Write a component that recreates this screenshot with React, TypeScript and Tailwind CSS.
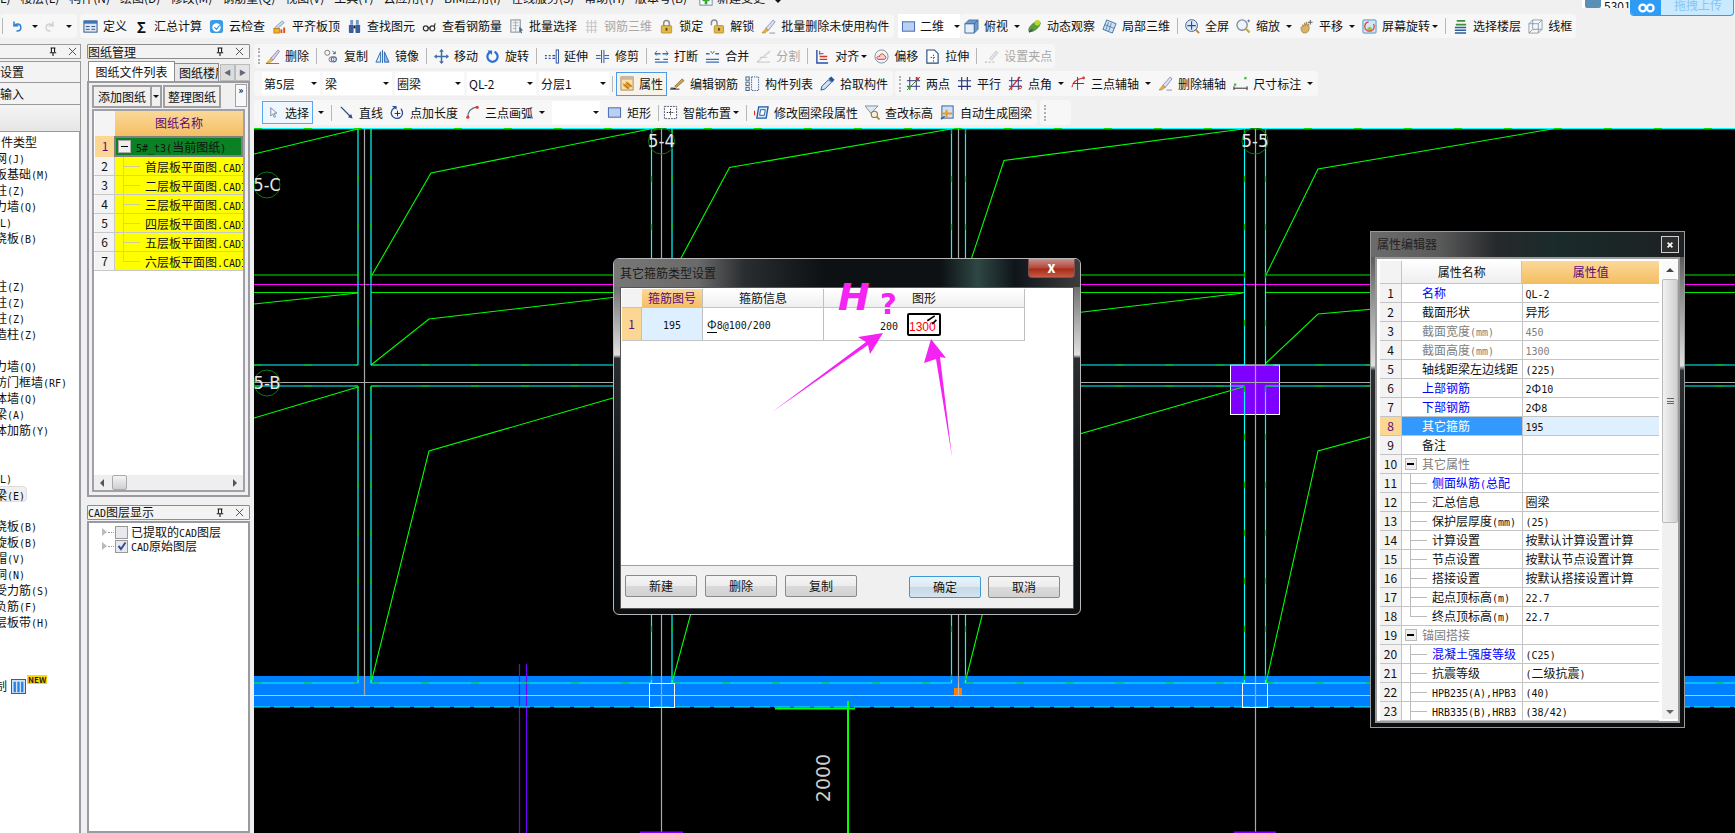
import React from 'react';

const S = (p: any) => <path fill="none" strokeWidth={1.2} strokeLinecap="round" {...p} />;
const icons: Record<string, React.ReactNode> = {
  undo: <><S d="M4 2v5h5" stroke="#2e7fd8" strokeWidth={2} /><S d="M4 7c2-3 8-4 9 1s-2 6-5 6" stroke="#2e7fd8" strokeWidth={2} /></>,
  redo: <g transform="matrix(-1 0 0 1 16 0)"><S d="M4 2v5h5" stroke="#cfd3d6" strokeWidth={2} /><S d="M4 7c2-3 8-4 9 1s-2 6-5 6" stroke="#cfd3d6" strokeWidth={2} /></g>,
  define: <><rect x="1" y="2" width="14" height="12" fill="#dfe9f5" stroke="#2a4f86" /><rect x="1" y="2" width="14" height="3" fill="#3f74b5" /><path d="M3 8h4M3 11h4M9 8h4M9 11h4" stroke="#2a4f86" /></>,
  cloud: <><rect x="1" y="1" width="14" height="14" rx="3" fill="#3a9be8" /><circle cx="8" cy="9" r="4.5" fill="#fff" /><S d="M6 9l2 2 3-4" stroke="#3a9be8" /></>,
  flush: <><path d="M3 9l8-7 2 2-8 7z" fill="#cfd8e6" stroke="#5d7fa8" strokeWidth=".7" /><rect x="2" y="10" width="6" height="5" fill="#f0b21e" stroke="#a66a10" strokeWidth=".7" /><rect x="9" y="11" width="2" height="4" fill="#d9541e" /><rect x="12" y="9" width="2" height="6" fill="#d9541e" /></>,
  binoc: <><rect x="2" y="6" width="5" height="9" rx="1" fill="#38619c" /><rect x="9" y="6" width="5" height="9" rx="1" fill="#38619c" /><rect x="3.5" y="1" width="3" height="5" fill="#6f95c7" /><rect x="9.5" y="1" width="3" height="5" fill="#6f95c7" /><rect x="7" y="7" width="2" height="3" fill="#223" /></>,
  glasses: <><circle cx="4" cy="10" r="2.6" fill="none" stroke="#333" strokeWidth="1.3" /><circle cx="11" cy="10" r="2.6" fill="none" stroke="#333" strokeWidth="1.3" /><S d="M6.5 9.5h2M13 8l1-3" stroke="#333" /></>,
  batch: <><rect x="2" y="1" width="10" height="13" fill="#f4f4f4" stroke="#7a8795" /><path d="M4 4h6M4 7h6M4 10h4M7 1v13" stroke="#9aa6b2" strokeWidth=".8" /><path d="M11 8l4 4-2 .5 1 2.5-1 .5-1-2.5-1 1z" fill="#45688f" /></>,
  rebar3d: <path d="M2 4h12M2 8h12M2 12h12M4 1v14M8 1v14M12 1v14" stroke="#c9c9c9" fill="none" strokeWidth="1.2" />,
  lock: <><S d="M5 7V4.5a3 3 0 0 1 6 0V7" stroke="#8c8c8c" strokeWidth="1.6" /><rect x="2.5" y="7" width="11" height="8" rx="1" fill="#e3b84a" stroke="#a67c1c" strokeWidth=".7" /><rect x="7" y="9.5" width="2" height="3" fill="#6d4c0f" /></>,
  unlock: <><S d="M1.5 6V4a3 3 0 0 1 6 0v2" stroke="#8c8c8c" strokeWidth="1.6" /><rect x="4.5" y="7" width="10" height="8" rx="1" fill="#e3b84a" stroke="#a67c1c" strokeWidth=".7" /><rect x="8.5" y="9.5" width="2" height="3" fill="#6d4c0f" /></>,
  brush: <><path d="M5 10L13 1l2 2-7 9z" fill="#dcdff2" stroke="#6a6fb0" strokeWidth=".7" /><path d="M5 10l3 2-4 3H1z" fill="#e8b23a" stroke="#a8761c" strokeWidth=".5" /><path d="M9 15h6" stroke="#7f90b5" /></>,
  rect: <rect x="1.5" y="3" width="13" height="10" fill="#b9d0f2" stroke="#3f63ad" />,
  cube: <><path d="M1 5h10v10H1z" fill="#e4eefa" stroke="#3d6797" /><path d="M1 5l4-4h10l-4 4zM11 5l4-4v10l-4 4z" fill="#6c9bcb" stroke="#3d6797" strokeWidth=".8" /></>,
  orbit: <><ellipse cx="8" cy="8" rx="7.5" ry="3.5" transform="rotate(-40 8 8)" fill="#5a9e3a" stroke="#2e6a20" strokeWidth=".6" /><circle cx="11" cy="4" r="3" fill="#b7d92a" /><path d="M2 14l4-3" stroke="#456" strokeWidth="1.5" /></>,
  local3d: <><path d="M5 1l10 4-4 10L1 11z" fill="#cfe0f5" stroke="#41719f" /><path d="M3 6l10 4M7 3.5L4 12M10 4.5L7 13" stroke="#41719f" strokeWidth=".8" /></>,
  zoomall: <><circle cx="7" cy="7" r="6.3" fill="#dbe7f6" stroke="#3d5f8c" /><path d="M7 2.5v9M2.5 7h9" stroke="#2a4f86" strokeWidth="1.2" /><path d="M11.5 11.5l3.5 3.5" stroke="#c9842d" strokeWidth="2" /></>,
  zoom: <><circle cx="6.5" cy="6.5" r="5.5" fill="#eef3f9" stroke="#7b8da3" strokeWidth="1.4" /><path d="M10.5 10.5l4 4" stroke="#c9a14a" strokeWidth="2.2" /><path d="M12 2h3M13.5 .5v3" stroke="#667" strokeWidth=".9" /></>,
  hand: <><path d="M3 9l1-3 1 2 1-4 1 3 1-4 1 4 1-2 1 4c0 4-2 6-5 6-3 0-4-3-4-6z" fill="#d9b36a" stroke="#8f6d2e" strokeWidth=".6" /><path d="M12 1v5M9.5 3.5h5" stroke="#556" /></>,
  rotate: <><rect x="1" y="1" width="14" height="14" rx="1" fill="#cfe6f5" stroke="#4a93c4" /><path d="M5 11l3-3 3 2-2 3z" fill="#8dc63f" /><circle cx="8" cy="8" r="5" fill="none" stroke="#e53a2e" strokeWidth="1.3" strokeDasharray="22 6" /></>,
  layers: <><path d="M4 2l9 0M3 6h11" stroke="#3d8f3a" strokeWidth="2" /><path d="M2 9h12M2 12h12M2 15h12" stroke="#2a5f9c" strokeWidth="1.6" /></>,
  wire: <path d="M1 5h10v10H1zM1 5l4-4h10v10l-4 4M11 5l4-4M5 1v10H15M5 11l-4 4" fill="none" stroke="#7f93a8" strokeWidth=".9" />,
  erase: <><path d="M6 10l8-9 1.5 1.5-7 9.5z" fill="#d9d3ef" stroke="#6a5fa8" strokeWidth=".7" /><path d="M6 10l2.5 2-4 3H1.5z" fill="#efc04a" stroke="#a8761c" strokeWidth=".5" /><path d="M1 15.5h14" stroke="#5b6f90" /></>,
  copy: <><circle cx="3.5" cy="4" r="2.7" fill="none" stroke="#777" /><circle cx="10.5" cy="11" r="2.7" fill="none" stroke="#4a6f9c" strokeWidth="1.3" /><circle cx="8" cy="11" r="2.7" fill="none" stroke="#777" /><path d="M9 2l3 3M12 2.5V5H9.5" stroke="#3d5f8c" fill="none" /></>,
  mirror: <><path d="M1 14L6 3v11z" fill="#dfeaf7" stroke="#2e6bb0" /><path d="M15 14L10 3v11z" fill="#8fb6e2" stroke="#2e6bb0" /><path d="M8 1v14" stroke="#2e6bb0" /></>,
  move: <><path d="M8 1v14M1 8h14" stroke="#3f6fa8" strokeWidth="1.6" /><path d="M8 0l2.5 3h-5zM8 16l2.5-3h-5zM0 8l3-2.5v5zM16 8l-3-2.5v5z" fill="#3f6fa8" /></>,
  rotb: <><S d="M5 3.5a5.5 5.5 0 1 0 6 0" stroke="#2e6fd0" strokeWidth="2.4" /><path d="M2.5 1.5h5v5z" fill="#2e6fd0" /></>,
  extend: <><path d="M1 7h2M5 7h2M9 7h3M1 10h2M5 10h2M9 10h3" stroke="#2b4f9e" strokeWidth="1.2" /><rect x="13" y="1" width="2.5" height="14" fill="none" stroke="#2b4f9e" /></>,
  trim: <><path d="M1 7h5M10 7h5M1 10h5M10 10h5" stroke="#2b4f9e" /><path d="M7 1v14M9.5 1v14" stroke="#2b4f9e" /></>,
  brk: <><path d="M1 11h5M10 11h5M1 14h14" stroke="#3b6fb0" strokeWidth="1.2" /><path d="M1 5h6M9 5h6" stroke="#3b6fb0" strokeWidth="1.5" /><path d="M3 2l-2 3 2 2M13 2l2 3-2 2" stroke="#3b6fb0" fill="none" /></>,
  merge: <><path d="M1 11h14M1 14h14" stroke="#3b6fb0" strokeWidth="1.2" /><path d="M1 5h4M11 5h4" stroke="#3b6fb0" strokeWidth="1.5" /><path d="M6 2l2 3 2-3" stroke="#3b6fb0" fill="none" /></>,
  split: <><path d="M1 14L15 2M1 14h14M4 9h8" stroke="#cfcfcf" strokeWidth="1.3" /><path d="M10 5l4-3 1 2-4 3z" fill="#dcdcdc" /></>,
  align: <><path d="M2 1v14h12" stroke="#2b4f9e" strokeWidth="1.5" fill="none" /><path d="M5 11h8M5 8h8" stroke="#d2342a" strokeWidth="1.4" /><path d="M5 5h4M5 2v4" stroke="#2b4f9e" /></>,
  offset: <><circle cx="8" cy="8" r="7" fill="#f3f3f3" stroke="#7e8c9c" /><path d="M4 11c-2-2 0-4 2-3 0-3 4-4 5-1 2 0 2 4 0 4z" fill="#f5d4d0" stroke="#d23a2e" /></>,
  stretch: <><path d="M2 1h8l4 4v10H2z" fill="#fff" stroke="#27497f" strokeWidth="1.2" /><path d="M9 6v8M6 9h6" stroke="#27497f" strokeDasharray="1.5 1.5" /></>,
  grip: <><path d="M6 10l7-8 2 2-7 8z" fill="#e4e4e4" stroke="#c8c8c8" /><path d="M1 14h2M5 14h2M9 14h2" stroke="#bbb" strokeWidth="1.5" /></>,
  prop: <><rect x="1" y="1" width="13" height="14" fill="#fbe1a8" stroke="#9a8a70" /><rect x="1" y="1" width="13" height="3" fill="#cbb896" /><path d="M3 10l5-4 5 4-5 4z" fill="#e69a2c" /><path d="M3 8l7 6M6 6l7 6" stroke="#8a5a10" strokeWidth=".7" /></>,
  edit: <><path d="M5 11l8-8 2 2-8 7z" fill="#d2a14e" stroke="#7e5c1e" strokeWidth=".7" /><path d="M1 13c2-1 3 1 5 0" stroke="#222" strokeWidth="1.2" fill="none" /><path d="M0 14h10" stroke="#222" /></>,
  list: <><rect x="1" y="1" width="3.5" height="3.5" fill="none" stroke="#3e5f8a" /><rect x="1" y="6.5" width="3.5" height="3.5" fill="none" stroke="#3e5f8a" /><rect x="1" y="12" width="3.5" height="3.5" fill="none" stroke="#3e5f8a" /><rect x="7" y="1" width="7.5" height="14.5" fill="none" stroke="#3e5f8a" strokeDasharray="1.5 1" /></>,
  picker: <><path d="M1 15l1-4 7-7 3 3-7 7z" fill="#cfe3fa" stroke="#1f54a6" /><path d="M9 3l3-2.5 3.500 3.500L13 7z" fill="#1f54a6" /></>,
  two: <><path d="M4 1v14M11 1v14M1 5h14M1 11h14" stroke="#24337c" /><path d="M1 15L15 1" stroke="#5a7030" /><circle cx="3.5" cy="12.5" r="1.6" fill="#3fb23f" /><circle cx="12.5" cy="3" r="1.6" fill="#d03030" /></>,
  par: <path d="M5 1v14M11 1v14M1 5h14M1 11h14" stroke="#24337c" strokeWidth="1.2" />,
  ang: <><path d="M4 1v14M11 1v14M1 5h14M1 11h14" stroke="#24337c" /><path d="M1 15L13 1" stroke="#e02020" strokeWidth="1.3" /><circle cx="13" cy="12" r="1.5" fill="none" stroke="#e02020" /></>,
  arc3: <><path d="M1 12C2 5 7 3 14 2" stroke="#d23a3a" fill="none" strokeWidth="1.3" /><path d="M7 1v14M2 8h12" stroke="#2b3f80" /><circle cx="13.5" cy="2" r="1.4" fill="#d23a3a" /></>,
  dim: <><rect x="12" y="1" width="2.5" height="2.5" fill="#3fc23f" /><rect x="1" y="8" width="2.5" height="2.5" fill="#3fc23f" /><path d="M1 13h14M1 11v4M15 11v4" stroke="#222" /></>,
  cursor: <path d="M4 1v12l3-3 2 5 2-1-2-5h4z" fill="#f1f6ff" stroke="#59647a" />,
  line: <><path d="M2 2l11 11" stroke="#2c4f86" strokeWidth="1.4" /><path d="M14.5 14.5l-5-1.500 3.500-3.500z" fill="#2c4f86" /></>,
  addlen: <><S d="M6 2.5a6 6 0 1 0 6 2" stroke="#2b4f9e" strokeWidth="1.4" /><path d="M8 6v6M5 9h6" stroke="#222" /><path d="M2 1h5v4z" fill="#2b4f9e" /></>,
  arc: <><path d="M3 13C3 7 7 3 13 2" stroke="#5f6f82" fill="none" strokeWidth="1.3" /><circle cx="3" cy="13" r="1.7" fill="#e03a2e" /><circle cx="13" cy="2.5" r="1.7" fill="#e03a2e" /></>,
  smart: <><rect x="1.5" y="1.5" width="13" height="13" fill="#fff" stroke="#40506a" strokeDasharray="2 1" /><path d="M8 4v8M4 8h8" stroke="#222" strokeDasharray="1.5 1" /></>,
  modify: <><path d="M5 2h10l-2 12H3z" fill="#d8e8f8" stroke="#1f5aa6" strokeWidth="1.4" /><path d="M7 5h5l-1 6H6z" fill="#fff" stroke="#1f5aa6" /><path d="M.5 6v5" stroke="#d03020" strokeWidth="1.4" /></>,
  funnel: <><path d="M0 1h14L8 7v4z" fill="#dfe7ef" stroke="#7d8ea0" /><circle cx="10" cy="10" r="3.3" fill="#f6f2df" stroke="#8f7d3a" strokeWidth="1.2" /><path d="M12.5 12.5l3 3" stroke="#b78a2a" strokeWidth="2" /></>,
  auto: <><rect x="2" y="1" width="12" height="13" fill="#cfe0f7" stroke="#2b5fa8" /><path d="M7 5v9M2 9h11" stroke="#e39a2e" strokeWidth="2.2" /><path d="M1 15l4-3" stroke="#2b5fa8" strokeWidth="1.5" /></>,
};

function Ic({ n, cls = 'w-[15px] h-[15px]' }: { n: string; cls?: string }) {
  return <svg viewBox="0 0 16 16" className={`${cls} shrink-0`}>{icons[n]}</svg>;
}
const Caret = ({ cls = '-ml-[1px]' }: { cls?: string }) => (
  <span className={`shrink-0 w-0 h-0 border-x-[3px] border-x-transparent border-t-[3px] border-t-[#111] ${cls}`} />
);
const Sep = () => <span className="shrink-0 w-px h-[16px] bg-[#b8b8b8]" />;

// Latin runs use the narrow half-width look of the original bitmap font.
const Mx = ({ t }: { t: string }) => (
  <>
    {t.split(/([\x21-\x7e]+)/).map((p, i) =>
      /^[\x21-\x7e]/.test(p) ? <span key={i} className="text-[10px] [font-family:'DejaVu_Sans_Mono',monospace]">{p}</span> : p
    )}
  </>
);

type E = string | [string, string, boolean?];
function Items({ list }: { list: E[] }) {
  return (
    <>
      {list.map((e, i) =>
        e === '|' ? <Sep key={i} /> : e === 'v' ? <Caret key={i} /> : e === 't' ? <Caret key={i} cls="-ml-[5px]" /> : e === '<' ? <span key={i} className="w-0 -ml-[10px] shrink-0" /> : (
          <span key={i} className={`flex items-center gap-[5px] shrink-0 whitespace-nowrap ${(e as any)[2] ? 'text-[#a8a8a8]' : 'text-[#111]'}`}>
            <Ic n={(e as any)[0]} />
            {(e as any)[1]}
          </span>
        )
      )}
    </>
  );
}
const Bar = ({ children, cls = '' }: { children: React.ReactNode; cls?: string }) => (
  <div className={`flex items-center gap-[7px] bg-[#f7f7f7] rounded-sm h-full ${cls}`}>{children}</div>
);
const Grip = () => <span className="shrink-0 w-[2px] h-[16px] -mr-[2px] border-l-2 border-dotted border-[#b0b0b0]" />;

const r1a: E[] = [['define', '定义']];
const r1b: E[] = [['cloud', '云检查'], ['flush', '平齐板顶'], ['binoc', '查找图元'], ['glasses', '查看钢筋量'], ['batch', '批量选择'], ['rebar3d', '钢筋三维', true], ['lock', '锁定'], ['unlock', '解锁'], ['brush', '批量删除未使用构件']];
const r1c: E[] = [['cube', '俯视'], 'v', ['orbit', '动态观察'], ['local3d', '局部三维'], '|', ['zoomall', '全屏'], ['zoom', '缩放'], 'v', ['hand', '平移'], 'v', ['rotate', '屏幕旋转'], 't', '|', ['layers', '选择楼层'], ['wire', '线框']];
const r2: E[] = [['erase', '删除'], '|', ['copy', '复制'], ['mirror', '镜像'], '|', ['move', '移动'], ['rotb', '旋转'], '|', ['extend', '延伸'], ['trim', '修剪'], '|', ['brk', '打断'], ['merge', '合并'], ['split', '分割', true], '|', ['align', '对齐'], 't', ['offset', '偏移'], ['stretch', '拉伸'], '|', ['grip', '设置夹点', true]];
const r3a: E[] = [['edit', '编辑钢筋'], ['list', '构件列表'], ['picker', '拾取构件']];
const r3b: E[] = [['two', '两点'], ['par', '平行'], ['ang', '点角'], 'v', ['arc3', '三点辅轴'], 'v', ['brush', '删除辅轴'], ['dim', '尺寸标注'], 'v'];
const r4a: E[] = [['line', '直线'], ['addlen', '点加长度'], ['arc', '三点画弧'], 'v'];
const r4b: E[] = [['rect', '矩形'], '|', '<', ['smart', '智能布置'], 't', '|', ['modify', '修改圈梁段属性'], ['funnel', '查改标高'], ['auto', '自动生成圈梁']];

const menus = ['L)', '楼层(L)', '构件(N)', '绘图(D)', '修改(M)', '钢筋量(Q)', '视图(V)', '工具(T)', '云应用(Y)', 'BIM应用(I)', '在线服务(S)', '帮助(H)', '版本号(B)'];

const listRows = ['件类型', '网(J)', '板基础(M)', '柱(Z)', '力墙(Q)', 'L)', '浇板(B)', '', '', '柱(Z)', '柱(Z)', '柱(Z)', '造柱(Z)', '', '力墙(Q)', '防门框墙(RF)', '体墙(Q)', '梁(A)', '体加筋(Y)', '', '', 'L)', '*梁(E)', '', '浇板(B)', '旋板(B)', '帽(V)', '洞(N)', '受力筋(S)', '负筋(F)', '层板带(H)', '', '', ''];

const Pin = () => (
  <svg viewBox="0 0 10 12" className="w-[8px] h-[10px]"><path d="M2 1h6M3 1v5M7 1v5M1 7h8M5 7v4" stroke="#111" strokeWidth="1.3" fill="none" /></svg>
);
const XIc = () => (
  <svg viewBox="0 0 10 10" className="w-[9px] h-[9px]"><path d="M1 1l8 8M9 1l-8 8" stroke="#444" fill="none" /></svg>
);

function PanelHead({ t, cls = '' }: { t: string; cls?: string }) {
  return (
    <div className={`h-[15px] shrink-0 flex items-center border border-[#8c8c8c] bg-[#f3f3f3] rounded-[1px] overflow-hidden leading-none ${cls}`}>
      <span className="flex-1 whitespace-nowrap overflow-hidden"><Mx t={t} /></span>
      <span className="mr-[11px] flex"><Pin /></span>
      <span className="mr-[5px] flex"><XIc /></span>
    </div>
  );
}

function LeftPanel() {
  return (
    <div className="w-[81px] shrink-0 flex flex-col bg-[#f0f0f0] overflow-hidden">
      <div className="h-[15px] shrink-0 flex items-center justify-end border-y border-[#9a9a9a] border-r bg-[#f3f3f3]">
        <span className="mr-[11px] flex"><Pin /></span><span className="mr-[3px] flex"><XIc /></span>
      </div>
      <div className="mt-[2px] h-[22px] shrink-0 flex items-center border-y border-r border-[#9a9a9a] bg-[#f3f3f3]">设置</div>
      <div className="h-[22px] shrink-0 flex items-center border-b border-r border-[#9a9a9a] bg-[#f3f3f3]">输入</div>
      <div className="h-[27px] shrink-0 border-r border-b border-[#9a9a9a] bg-[linear-gradient(180deg,#f4f4f4,#e6e6e6)]" />
      <div className="flex-1 bg-white border-r-2 border-[#9a9aa2] pt-[2px]">
        {listRows.map((t, i) => (
          <div key={i} className="h-[16px] leading-[16px] whitespace-nowrap overflow-hidden">
            {t.startsWith('*') ? (
              <span className="inline-block w-[28px] h-[16px] bg-[#f0f0f0] border border-[#ddd] rounded-r-sm -ml-[1px] overflow-hidden"><span className="-ml-[5px] inline-block"><Mx t={t.slice(1)} /></span></span>
            ) : (
              <span className={`inline-block ${t === '件类型' ? 'ml-[1px]' : t === 'L)' ? '' : '-ml-[5px]'}`}><Mx t={t} /></span>
            )}
          </div>
        ))}
        <div className="h-[16px] flex items-center relative leading-[16px]">
          <span className="-ml-[5px] inline-block">制</span>
          <svg viewBox="0 0 16 16" className="ml-[4px] w-[15px] h-[15px]"><rect x=".5" y=".5" width="15" height="15" fill="#cfe4fb" stroke="#35566f" /><path d="M4 3v11M8 3v11M12 3v11" stroke="#2a83e0" strokeWidth="2.5" /></svg>
          <span className="absolute left-[27px] -top-[3px] bg-[#ffd800] text-[#222] text-[8px] font-bold leading-[9px] px-[1px]">NEW</span>
        </div>
      </div>
    </div>
  );
}

const drawings = ['首层板平面图', '二层板平面图', '三层板平面图', '四层板平面图', '五层板平面图', '六层板平面图'];

function MidPanel() {
  return (
    <div className="w-[163px] ml-[6px] shrink-0 flex flex-col">
      <PanelHead t="图纸管理" />
      <div className="h-[20px] mt-[2px] shrink-0 flex items-end pl-[1px]">
        <div className="w-[87px] h-[20px] bg-white border border-b-0 border-[#8c8c8c] text-center leading-[19px]">图纸文件列表</div>
        <div className="w-[44px] h-[18px] bg-[#e8e8e8] border border-b-0 border-l-0 border-[#8c8c8c] pl-[4px] leading-[17px] overflow-hidden whitespace-nowrap">图纸楼层</div>
        <div className="w-[15px] h-[17px] ml-[1px] bg-[#dcdcdc] border border-[#bbb] flex items-center justify-center text-[7px] text-[#667]">◀</div>
        <div className="w-[15px] h-[17px] bg-[#e4e4e4] border border-[#bbb] flex items-center justify-center text-[7px] text-[#667]">▶</div>
      </div>
      <div className="h-[416px] shrink-0 bg-[#f0f0f0] border-2 border-[#9a9aa0] flex flex-col">
        <div className="h-[26px] shrink-0 flex items-center pl-[3px] relative">
          <span className="w-[58px] h-[23px] border-2 border-[#a0a0a0] border-r-0 bg-[#f0f0f0] text-center leading-[19px]">添加图纸</span>
          <span className="w-[12px] h-[23px] border-2 border-[#a0a0a0] flex items-center justify-center"><Caret cls="" /></span>
          <span className="ml-[1px] w-[58px] h-[23px] border-2 border-[#a0a0a0] text-center leading-[19px]">整理图纸</span>
          <span className="absolute right-[1px] top-[1px] w-[12px] h-[23px] border border-[#a0a0a0] bg-[#f8f8f8] text-center text-[9px] font-bold leading-[12px]">»</span>
        </div>
        <div className="flex-1 mx-[3px] border-2 border-[#a0a0a8] bg-white flex flex-col overflow-hidden">
          <div className="h-[25px] shrink-0 flex">
            <div className="w-[20px] ml-[1px] bg-[#f4f4f4]" />
            <div className="flex-1 bg-[linear-gradient(180deg,#fbd899,#f4bf63)] text-center leading-[24px] text-[#5a0a78]">图纸名称</div>
          </div>
          <div className="h-[21px] shrink-0 flex">
            <div className="w-[20px] ml-[1px] bg-[#fcd793] text-center leading-[20px] text-[#5a0a78]">1</div>
            <div className="flex-1 bg-[#0a8224] border-2 border-[#808080] flex items-center pl-[2px] -ml-[1px] whitespace-nowrap overflow-hidden">
              <span className="w-[13px] h-[13px] border border-[#aaa] bg-[#eee] flex items-center justify-center mr-[5px] shrink-0"><span className="w-[7px] h-[1px] bg-black" /></span>
              <span><Mx t="5#_t3(当前图纸)" /></span>
            </div>
          </div>
          {drawings.map((d, i) => (
            <div key={d} className="h-[19px] shrink-0 flex border-b border-[#c8c8c8]">
              <div className="w-[20px] ml-[1px] bg-[#f3f3f3] text-center leading-[18px] border-r border-[#c8c8c8]">{i + 2}</div>
              <div className="flex-1 bg-[#ffff00] relative pl-[30px] leading-[19px] whitespace-nowrap overflow-hidden">
                <span className={`absolute left-[8px] top-0 w-px bg-[#cfcf90] ${i === 5 ? 'h-[10px]' : 'h-[19px]'}`} />
                <span className="absolute left-[8px] top-[9px] w-[17px] h-px bg-[#cfcf90]" />
                <Mx t={`${d}.CADI`} />
              </div>
            </div>
          ))}
          <div className="flex-1" />
          <div className="h-[15px] shrink-0 bg-[#eeeeee] flex items-center justify-between px-[6px] relative">
            <span className="w-0 h-0 border-y-[4px] border-y-transparent border-r-[4px] border-r-[#555]" />
            <span className="absolute left-[18px] top-0 w-[15px] h-[15px] border border-[#aaa] rounded-[2px] bg-[linear-gradient(180deg,#f4f4f4,#cfcfcf)]" />
            <span className="w-0 h-0 border-y-[4px] border-y-transparent border-l-[4px] border-l-[#555]" />
          </div>
        </div>
        <div className="h-[3px] shrink-0" />
      </div>
      <div className="h-[8px] shrink-0" />
      <PanelHead t="CAD图层显示" />
      <div className="mt-[1px] flex-1 bg-white border-2 border-[#9a9aa2] pt-[2px]">
        {([['已提取的CAD图层', false], ['CAD原始图层', true]] as [string, boolean][]).map(([t, c]) => (
          <div key={t} className="h-[14px] flex items-center pl-[13px] whitespace-nowrap">
            <span className="w-0 h-0 border-y-[4px] border-y-transparent border-l-[5px] border-l-[#bbb]" />
            <span className="w-[6px] h-px ml-[1px] border-t border-dotted border-[#999]" />
            <span className="ml-[1px] mr-[3px] w-[13px] h-[13px] border border-[#999] bg-[#e8e8ee] flex items-center justify-center">
              {c ? <svg viewBox="0 0 10 10" className="w-[10px] h-[10px]"><path d="M1.5 5l2.5 3L8.500 1.500" stroke="#34509c" strokeWidth="2" fill="none" /></svg> : null}
            </span>
            <span><Mx t={t} /></span>
          </div>
        ))}
      </div>
    </div>
  );
}

const W = 1.2;
function Canvas() {
  const segs = [[254, 358], [371, 651.5], [672, 951.5], [965.5, 1244.5], [1265.5, 1735]];
  const cols = [358, 371, 651.5, 672, 951.5, 965.5, 1244.5, 1265.5];
  const grays: [number, number][] = [[364.5, 695], [661.5, 833], [958.5, 695], [1255.5, 833]];
  const diag = [
    '254,154 358,129', '372,275 431,173 650,129', '672,275 729.5,167.5 951,129', '966,275 1004,160.5 1243,129', '1266,275 1318,169 1558,128',
    '254,304 358,293', '371,365 429,319 651,293', '672,365 730,319 951,293', '965,365 1024,319 1243,293', '1266,363 1318,314 1552,293',
    '254,418 358,387', '371,683 429,451 651,387', '672,683 735,451 951,387', '965,683 1024,450 1243,387', '1266,683 1318,451 1552,387',
  ];
  return (
    <div className="relative flex-1 bg-black overflow-hidden">
      <svg viewBox="254 128 1481 705" className="absolute inset-0 w-[1481px] h-[705px]">
        <rect x="254" y="676" width="1481" height="31" fill="#0080ff" />
        <path d="M519.5 664V833M526.5 664V833" stroke="#7000ff" strokeWidth={W} />
        <rect x="1230.5" y="365" width="49" height="49.500" fill="#8000ff" stroke="#fff" strokeWidth="1" />
        {diag.map(d => <polyline key={d} points={d} fill="none" stroke="#00ff00" strokeWidth="1.1" />)}
        {segs.map(([a, b]) => (
          <g key={a}>
            <path d={`M${a} 275H${b}M${a} 292.5H${b}`} stroke="#00e800" strokeWidth={W} />
            {[365, 386, 683].map(y => <g key={y}><path d={`M${a} ${y}H${b}`} stroke="#00ffff" strokeWidth={W} /><path d={`M${a} ${y}H${b}`} stroke="#00c800" strokeWidth={W} strokeDasharray="8 42" /></g>)}
          </g>
        ))}
        <path d="M254 284.5H1735" stroke="#ff00ff" strokeWidth={W} />
        <path d="M254 382.5H1735" stroke="#aaaaaa" strokeWidth={W} />
        <path d="M254 695.5H1735" stroke="#c4c4c4" strokeWidth={W} />
        <path d="M254 707H1735" stroke="#00ffe0" strokeWidth={W} strokeDasharray="16 4" />
        {cols.map(x => <g key={x}><path d={`M${x} 128V365M${x} 386V683`} stroke="#00ffff" strokeWidth={W} /><path d={`M${x} 128V365M${x} 386V683`} stroke="#00c800" strokeWidth={W} strokeDasharray="6 42" /></g>)}
        {grays.map(([x, e]) => <path key={x} d={`M${x} 128V${e}`} stroke="#a8a8a8" strokeWidth={W} />)}
        <path d="M254 128.5H1735" stroke="#00ffff" strokeWidth="1.5" />
        <path d="M254 128.5H1735" stroke="#00e000" strokeWidth="1.5" strokeDasharray="8 42" />
        <rect x="649.5" y="683.5" width="25" height="24" fill="none" stroke="#fff" />
        <rect x="1242.5" y="683.5" width="25" height="24" fill="none" stroke="#fff" />
        <rect x="954" y="688" width="8" height="7" fill="#ff7f00" />
        <path d="M958.5 683V695" stroke="#bbb" />
        <path d="M775 708.5H855" stroke="#00ff00" strokeWidth="2" />
        <path d="M848 701V833" stroke="#00ff00" strokeWidth="2" />
        <path d="M640 832.5H683M1234 832.5H1276" stroke="#8000ff" strokeWidth="2" />
        {([[267, 185, '5-C'], [267, 383, '5-B'], [661.5, 141, '5-4'], [1255, 141, '5-5']] as [number, number, string][]).map(([x, y, t]) => (
          <g key={t}>
            <circle cx={x} cy={y} r="13" fill="none" stroke="#0c7a0c" strokeWidth="1" />
            <text x={x} y={y + 6} textAnchor="middle" textLength={27} lengthAdjust="spacingAndGlyphs" fill="#e6e6e6" fontSize="18" fontFamily="DejaVu Sans">{t}</text>
          </g>
        ))}
        <text transform="translate(830 778) rotate(-90)" textAnchor="middle" fill="#cfcfcf" fontSize="19" fontFamily="DejaVu Sans">2000</text>
      </svg>
    </div>
  );
}

const glassSide = 'bg-[linear-gradient(180deg,#3a3a3a_0%,#8a8a8a_12%,#e0e0e0_27%,#2a2e30_28%,#14181a_60%,#0c0f11_100%)]';
const Btn = ({ t, def, cls = '' }: { t: string; def?: boolean; cls?: string }) => (
  <div className={`w-[72px] h-[22px] rounded-[2px] border flex items-center justify-center ${def ? 'border-[#3c9bd6] bg-[linear-gradient(180deg,#eaf4fb_0%,#dbe9f2_50%,#c6d9e6_52%,#d4e3ee_100%)]' : 'border-[#8a8a8a] bg-[linear-gradient(180deg,#f5f5f5_0%,#ececec_50%,#dadada_52%,#d2d2d2_100%)]'} ${cls}`}>{t}</div>
);

function Dialog() {
  return (
    <div className={`absolute left-[613px] top-[258px] w-[468px] h-[357px] rounded-t-md rounded-b-md border border-[#b8b8b8] p-0 flex flex-col overflow-hidden ${glassSide}`}>
      <div className="h-[28px] shrink-0 relative bg-[linear-gradient(90deg,#777_0%,#6a6a6a_18%,#2a2d2f_28%,#0d1114_45%,#0d1114_70%,#2f4744_78%,#10151a_86%,#3c3c3c_100%)]">
        <span className="absolute left-[6px] top-[6px] text-[#1a1a1a] leading-[16px]">其它箍筋类型设置</span>
        <div className="absolute right-[5px] top-0 w-[47px] h-[19px] rounded-b-[4px] border border-t-0 border-[#7a5050] bg-[linear-gradient(180deg,#c9908a,#b4473a_50%,#a82a15_55%,#c45a48)] flex items-center justify-center text-white text-[12px] font-black leading-none">X</div>
      </div>
      <div className="flex-1 mx-[6px] mb-[5px] border border-[#555] bg-white flex flex-col overflow-hidden">
        <div className="flex-1 pt-[1px] pl-[1px]">
          <div className="flex h-[18px]">
            <div className="w-[20px] bg-[#f3f3f3]" />
            <div className="w-[61px] bg-[linear-gradient(180deg,#fbd899,#f4bf63)] text-center text-[#5a0a78] leading-[18px] border-r border-[#c0c0c0]">箍筋图号</div>
            <div className="w-[121px] bg-[linear-gradient(180deg,#ffffff,#efefef)] text-center leading-[18px] border-r border-[#c0c0c0]">箍筋信息</div>
            <div className="w-[201px] bg-[linear-gradient(180deg,#ffffff,#efefef)] text-center leading-[18px] border-r border-[#c0c0c0]">图形</div>
          </div>
          <div className="flex h-[34px] border-y border-[#c4c4c4] w-[403px]">
            <div className="w-[20px] bg-[#fcd793] text-center text-[#5a0a78] leading-[32px] border-r border-[#c0c0c0]">1</div>
            <div className="w-[61px] bg-[#deefff] text-center leading-[32px] border-r border-[#c0c0c0]"><Mx t="195" /></div>
            <div className="w-[121px] pl-[4px] leading-[32px] border-r border-[#c0c0c0]"><span className="border-b border-black">Φ</span><Mx t="8@100/200" /></div>
            <div className="w-[201px] pl-[56px] flex items-center border-r border-[#c0c0c0]">
              <span className="mt-[2px] w-[19px]"><Mx t="200" /></span>
              <div className="relative ml-[8px] w-[34px] h-[23px] border-2 border-black rounded-[2px] overflow-hidden">
                <span className="absolute left-0 bottom-0 text-[#ff0000] text-[12px] leading-[13px] [font-family:'Liberation_Sans',sans-serif]">1300</span>
                <svg viewBox="0 0 34 23" className="absolute inset-0 w-[30px] h-[19px]"><path d="M21 7l9-6M27 11l5-5" stroke="#000" strokeWidth="2" fill="none" /></svg>
              </div>
            </div>
          </div>
        </div>
        <div className="h-[43px] shrink-0 border-t border-[#a0a0a0] bg-[#f0f0f0] flex pl-[4px] pt-[9px]">
          <Btn t="新建" /><Btn t="删除" cls="ml-[8px]" /><Btn t="复制" cls="ml-[8px]" /><Btn t="确定" def cls="ml-[52px] mt-[1px]" /><Btn t="取消" cls="ml-[7px] mt-[1px]" />
        </div>
      </div>
    </div>
  );
}

type P = [string, string, string?, number?];
const props: P[] = [
  ['名称', 'QL-2', 'b'], ['截面形状', '异形'], ['截面宽度(mm)', '450', 'g'], ['截面高度(mm)', '1300', 'g'], ['轴线距梁左边线距', '(225)'], ['上部钢筋', '2Φ10', 'b'], ['下部钢筋', '2Φ8', 'b'], ['其它箍筋', '195', 's'], ['备注', ''], ['其它属性', '', 'x'],
  ['侧面纵筋(总配', '', 'b', 1], ['汇总信息', '圈梁', '', 1], ['保护层厚度(mm)', '(25)', '', 1], ['计算设置', '按默认计算设置计算', '', 1], ['节点设置', '按默认节点设置计算', '', 1], ['搭接设置', '按默认搭接设置计算', '', 1], ['起点顶标高(m)', '22.7', '', 1], ['终点顶标高(m)', '22.7', '', 2],
  ['锚固搭接', '', 'x'], ['混凝土强度等级', '(C25)', 'b', 1], ['抗震等级', '(二级抗震)', '', 1], ['HPB235(A),HPB3', '(40)', '', 1], ['HRB335(B),HRB3', '(38/42)', '', 1],
];

function PropsWin() {
  return (
    <div className={`absolute left-[1370px] top-[231px] w-[315px] h-[497px] border border-[#9a9a9a] flex flex-col ${glassSide}`}>
      <div className="h-[25px] shrink-0 relative bg-[linear-gradient(90deg,#6c6c6c_0%,#5a5a5a_22%,#26292b_40%,#1a2a2a_60%,#1d2022_100%)]">
        <span className="absolute left-[6px] top-[4px] text-[#222] leading-[16px]">属性编辑器</span>
        <div className="absolute right-[5px] top-[4px] w-[18px] h-[17px] border border-[#d0d0d0] bg-[#2e2e2e] flex items-center justify-center">
          <svg viewBox="0 0 10 10" className="w-[8px] h-[8px]"><path d="M2 2l6 6M8 2l-6 6" stroke="#fff" strokeWidth="2" /></svg>
        </div>
      </div>
      <div className="flex-1 mx-[4px] mb-[4px] border-2 border-[#9a9a9a] bg-white p-[2px] flex overflow-hidden">
        <div className="w-[280px] shrink-0 pl-[1px]">
          <div className="flex h-[23px] border-b border-[#c4c4c4]">
            <div className="w-[22px] bg-[#f3f3f3] border-r border-[#c4c4c4]" />
            <div className="w-[121px] bg-[linear-gradient(180deg,#ffffff,#eeeeee)] text-center leading-[22px] border-r border-[#c4c4c4]">属性名称</div>
            <div className="w-[137px] bg-[linear-gradient(180deg,#fbd899,#f4bf63)] text-center text-[#5a0a78] leading-[22px]">属性值</div>
          </div>
          {props.map(([name, val, k, tree], i) => (
            <div key={i} className="flex h-[19px] border-b border-[#c4c4c4] leading-[18px]">
              <div className={`w-[22px] text-center border-r border-[#c4c4c4] ${k === 's' ? 'bg-[#fcd793] text-[#5a0a78]' : 'bg-[#f3f3f3]'}`}>{i + 1}</div>
              <div className={`w-[121px] relative whitespace-nowrap overflow-hidden border-r border-[#c4c4c4] ${tree ? 'pl-[30px]' : 'pl-[20px]'} ${k === 'b' ? 'text-[#0000ff]' : k === 'g' || k === 'x' ? 'text-[#808080]' : k === 's' ? 'bg-[#3399ff] text-white' : 'text-[#111]'}`}>
                {k === 'x' ? <span className="absolute left-[3px] top-[3px] w-[12px] h-[12px] border border-[#bbb] bg-[#eee] flex items-center justify-center"><span className="w-[7px] h-[1.5px] bg-black" /></span> : null}
                {tree ? <span className={`absolute left-[8px] top-0 w-px bg-[#bbb] ${tree === 2 ? 'h-[10px]' : 'h-[19px]'}`} /> : null}
                {tree ? <span className="absolute left-[8px] top-[9px] w-[17px] h-px bg-[#bbb]" /> : null}
                <Mx t={name} />
              </div>
              <div className={`w-[137px] pl-[3px] whitespace-nowrap overflow-hidden ${k === 's' ? 'bg-[#deefff]' : ''} ${k === 'g' ? 'text-[#808080]' : 'text-[#111]'}`}><Mx t={val} /></div>
            </div>
          ))}
        </div>
        <div className="ml-[3px] w-[16px] bg-[#f0f0f0] flex flex-col items-center shrink-0">
          <div className="h-[18px] w-full bg-[#fafafa] flex items-center justify-center"><span className="w-0 h-0 border-x-[4px] border-x-transparent border-b-[4px] border-b-[#444]" /></div>
          <div className="h-[244px] w-full border border-[#bbb] rounded-[2px] bg-[linear-gradient(90deg,#f2f2f2,#d0d0d0)] flex items-center justify-center">
            <span className="w-[7px] h-[6px] border-y border-[#666] relative"><span className="absolute left-0 right-0 top-[1.5px] h-px bg-[#666]" /></span>
          </div>
          <div className="flex-1" />
          <div className="h-[14px] flex items-center"><span className="w-0 h-0 border-x-[4px] border-x-transparent border-t-[4px] border-t-[#666]" /></div>
        </div>
      </div>
    </div>
  );
}

export default function App() {
  return (
    <div className={`relative w-[1735px] h-[833px] overflow-hidden bg-[#f0f0f0] flex flex-col text-[12px] text-[#111] [font-family:'Noto_Sans_CJK_SC','Liberation_Sans',sans-serif]`}>
      {/* menu */}
      <div className="h-[14px] shrink-0 overflow-hidden flex items-start gap-[10px] whitespace-nowrap leading-[14px]">
        {menus.map(m => <span key={m} className="-mt-[9px] shrink-0">{m}</span>)}
        <svg viewBox="0 0 16 16" className="w-[14px] h-[14px] -mt-[8px] ml-[2px] shrink-0"><rect x="1" y="1" width="14" height="14" fill="#fff" stroke="#5b7fa8" /><path d="M8 5v9M4 9h8" stroke="#39a82e" strokeWidth="3" /></svg>
        <span className="-mt-[9px] -ml-[6px]">新建变更</span>
        <Caret cls="mt-0" />
      </div>
      {/* top toolbar */}
      <div className="h-[24px] shrink-0 flex">
        <Bar cls="w-[77px] !gap-[0px] pl-[2px]">
          <Sep />
          <span className="ml-[8px] flex"><Ic n="undo" cls="w-[12px] h-[13px]" /></span>
          <Caret cls="ml-[9px]" />
          <span className="ml-[6px] flex"><Ic n="redo" cls="w-[12px] h-[13px]" /></span>
          <Caret cls="ml-[10px]" />
        </Bar>
        <Bar cls="ml-[3px] w-[814px] pl-[3px]">
          <Items list={r1a} />
          <span className="flex items-center gap-[7px] ml-[2px] shrink-0"><span className="w-[11px] text-center text-[15px] font-bold leading-none">Σ</span>汇总计算</span>
          <Items list={r1b} />
        </Bar>
        <div className="ml-[4px] w-[62px] h-full bg-white flex items-center pl-[3px] gap-[4px] shrink-0 whitespace-nowrap">
          <Ic n="rect" />二维<Caret cls="ml-[6px]" />
        </div>
        <Bar cls="pl-[4px] pr-[4px]"><Items list={r1c} /></Bar>
      </div>
      {/* body */}
      <div className="flex-1 flex mt-[6px] min-h-0">
        <LeftPanel />
        <MidPanel />
        <div className="w-[1481px] ml-[4px] flex flex-col min-w-0">
          <div className="h-[24px] shrink-0 flex">
            <Bar cls="pl-[4px] pr-[3px]"><Grip /><Items list={r2} /></Bar>
          </div>
          <div className="h-[25px] mt-[3px] shrink-0 flex">
            <Bar cls="pl-[8px] pr-[5px] !gap-[3px]">
              {[['第5层', 'w-[58px]'], ['梁', 'w-[69px]'], ['圈梁', 'w-[69px]'], ['QL-2', 'w-[69px]'], ['分层1', 'w-[70px]']].map(([t, w]) => (
                <span key={t} className={`${w} h-[23px] bg-white flex items-center justify-between pl-[2px] pr-[3px] shrink-0`}>{t}<Caret cls="" /></span>
              ))}
              <Sep />
              <span className="flex items-center gap-[4px] w-[51px] h-[24px] border border-[#4d9be8] bg-[#f8f3e8] pl-[3px] shrink-0"><Ic n="prop" />属性</span>
              <span className="flex gap-[7px]"><Items list={r3a} /></span>
            </Bar>
            <Bar cls="ml-[2px] pl-[4px] pr-[5px]"><Grip /><Items list={r3b} /></Bar>
          </div>
          <div className="h-[25px] mt-[4px] shrink-0 flex">
            <Bar cls="pl-[8px] pr-[5px]">
              <span className="flex items-center gap-[6px] w-[51px] h-[23px] border border-[#5aa5f0] bg-[#eef6ff] pl-[5px] shrink-0"><Ic n="cursor" cls="w-[11px] h-[13px]" />选择</span>
              <Caret cls="-ml-[2px]" />
              <Sep />
              <Items list={r4a} />
              <span className="w-[48px] h-[23px] bg-white flex items-center justify-end pr-[1px] shrink-0"><Caret cls="" /></span>
              <Items list={r4b} />
            </Bar>
            <Bar cls="ml-[3px] w-[31px] pl-[4px]"><Grip /></Bar>
          </div>
          <div className="h-[3px] shrink-0" />
          <Canvas />
        </div>
      </div>

      <Dialog />
      <PropsWin />

      {/* hand-drawn annotations */}
      <svg viewBox="0 0 1735 833" className="absolute inset-0 w-[1735px] h-[833px] pointer-events-none">
        <polygon points="772,412 866,342 858,337 883,333 870,354 868,345" fill="#f423f4" />
        <polygon points="952,457 936,359 924,363 931,339 946,358 940,357" fill="#f423f4" />
      </svg>
      <span className="absolute left-[838px] top-[278px] text-[#f423f4] text-[38px] font-bold italic leading-none [font-family:'DejaVu_Sans',sans-serif] pointer-events-none">H</span>
      <span className="absolute left-[880px] top-[290px] text-[#f423f4] text-[29px] font-bold leading-none [font-family:'DejaVu_Sans',sans-serif] pointer-events-none">?</span>

      {/* tray widget */}
      <div className="absolute left-[1582px] top-0 w-[48px] h-[8px] bg-white overflow-hidden flex items-end pl-[3px] gap-[3px]">
        <span className="w-[16px] h-[10px] bg-[#5b8fb5] rounded-b-[2px] shrink-0" />
        <span className="-mb-[5px] leading-[14px]">5301</span>
      </div>
      <div className="absolute left-[1630px] top-0 w-[104px] h-[16px] rounded-b-[4px] bg-[#c9e9ff] overflow-hidden flex border border-t-0 border-[#2e9cf5]">
        <div className="w-[30px] bg-[#2e9cf5] flex items-center justify-center">
          <svg viewBox="0 0 20 12" className="w-[19px] h-[12px]"><circle cx="6" cy="6" r="3.5" fill="none" stroke="#fff" strokeWidth="2.4" /><circle cx="14" cy="6" r="3.5" fill="none" stroke="#fff" strokeWidth="2.4" /></svg>
        </div>
        <span className="ml-[13px] -mt-[3px] text-[#86c6f5] leading-[16px] whitespace-nowrap">拖拽上传</span>
      </div>
    </div>
  );
}
